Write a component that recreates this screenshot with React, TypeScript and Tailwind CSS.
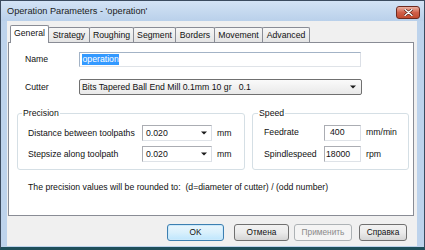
import React from 'react';

const tabs = [
  { label: 'General', w: 'w-[39px]', active: true },
  { label: 'Strategy', w: 'w-[42px]' },
  { label: 'Roughing', w: 'w-[45px]' },
  { label: 'Segment', w: 'w-[43px]' },
  { label: 'Borders', w: 'w-[40px]' },
  { label: 'Movement', w: 'w-[49px]' },
  { label: 'Advanced', w: 'w-[48px]' },
];

function Arrow() {
  return (
    <svg width="6" height="4" viewBox="0 0 6 4" className="shrink-0">
      <path d="M0 0.5h6L3 3.5z" fill="#1a1a1a" />
    </svg>
  );
}

function Combo({ value }: { value: string }) {
  return (
    <div className="w-[70px] h-[16px] flex items-center justify-between bg-white border border-[#abadb3] border-b-[#dfe3e8] border-r-[#dbdfe6] pl-[3px] pr-[4px]">
      <span>{value}</span>
      <Arrow />
    </div>
  );
}

function Field({ value, pad }: { value: string; pad: string }) {
  return (
    <div className={`w-[37px] h-[16px] flex items-center bg-white border border-[#abadb3] border-b-[#dfe3e8] border-r-[#dbdfe6] ${pad}`}>
      {value}
    </div>
  );
}

export default function App() {
  return (
    <div className="w-[425px] h-[250px] flex flex-col bg-[#bdd3ec] border border-[#3b4b5f] border-b-[3px] border-b-[#1e4f5a] text-[8.7px] leading-[11px] text-[#111] font-['Liberation_Sans',Arial,sans-serif] overflow-hidden">
      {/* title bar */}
      <div className="h-[20px] shrink-0 flex items-center justify-between pl-[6px] pr-[4px] bg-linear-to-b from-[#d3e3f5] to-[#b9d0ea]">
        <span className="text-[9.2px] text-[#1b1b1b]">Operation Parameters - 'operation'</span>
        <div className="w-[24px] h-[13px] mt-[2px] rounded-[3px] border border-[#6e2a20] bg-linear-to-b from-[#eab0a2] via-[#d0604a] to-[#c24a2e] flex items-center justify-center">
          <svg width="9" height="7" viewBox="0 0 9 7">
            <path d="M1 0.5l7 6M8 0.5l-7 6" stroke="#4a1a12" strokeWidth="2.6" strokeLinecap="round" />
            <path d="M1 0.5l7 6M8 0.5l-7 6" stroke="#fff" strokeWidth="1.4" strokeLinecap="round" />
          </svg>
        </div>
      </div>

      {/* client area */}
      <div className="flex-1 flex flex-col ml-[6px] mr-[7px] mb-[1px] bg-[#f0f0f0]">
        <div className="flex items-end h-[17px] mt-[4px] pl-[3px]">
          {tabs.map((t, i) =>
            t.active ? (
              <div
                key={i}
                className={`${t.w} h-[18px] -mb-px relative z-10 bg-white border border-[#898c95] border-b-0 rounded-t-[2px] flex items-center justify-center pb-[2px]`}
              >
                {t.label}
              </div>
            ) : (
              <div
                key={i}
                className={`${t.w} h-[15px] -ml-px bg-linear-to-b from-[#f6f6f6] to-[#e4e4e4] border border-[#898c95] border-b-0 rounded-t-[2px] flex items-center justify-center`}
              >
                {t.label}
              </div>
            )
          )}
        </div>

        {/* tab panel */}
        <div className="h-[174px] ml-[1px] mr-[3px] bg-white border border-[#898c95] pt-[9px] pl-[8px]">
          <div className="ml-[8px] flex items-center h-[15px]">
            <span className="w-[54px]">Name</span>
            <div className="w-[282px] h-[15px] flex items-center bg-white border border-[#a3b3c6] border-b-[#dfe3e8] border-r-[#dbdfe6] pl-[2px]">
              <span className="bg-[#3399ff] text-white px-[0.5px]">operation</span>
            </div>
          </div>

          <div className="mt-[12px] ml-[8px] flex items-center h-[16px]">
            <span className="w-[54px]">Cutter</span>
            <div className="w-[283px] h-[16px] flex items-center justify-between rounded-[2px] border border-[#707070] bg-linear-to-b from-[#fafafa] to-[#e9e9e9] pl-[2px] pr-[5px]">
              <span className="whitespace-pre">Bits Tapered Ball End Mill 0.1mm 10 gr   0.1</span>
              <Arrow />
            </div>
          </div>

          <div className="mt-[18px] flex">
            <div className="w-[228px] border border-[#d5dfe5] rounded-[3px] pb-[7px]">
              <div className="-mt-[6px] ml-[4px] px-[1px] bg-white w-fit">Precision</div>
              <div className="mt-[6px] pl-[10px] flex items-center h-[16px]">
                <span className="w-[114px]">Distance between toolpaths</span>
                <Combo value="0.020" />
                <span className="ml-[5px]">mm</span>
              </div>
              <div className="mt-[5px] pl-[10px] flex items-center h-[16px]">
                <span className="w-[114px]">Stepsize along toolpath</span>
                <Combo value="0.020" />
                <span className="ml-[5px]">mm</span>
              </div>
            </div>

            <div className="w-[157px] ml-[7px] border border-[#d5dfe5] rounded-[3px] pb-[7px]">
              <div className="-mt-[6px] ml-[5px] px-[1px] bg-white w-fit">Speed</div>
              <div className="mt-[5px] pl-[11px] flex items-center h-[17px]">
                <span className="w-[60px]">Feedrate</span>
                <Field value="400" pad="pl-[5px]" />
                <span className="ml-[5px]">mm/min</span>
              </div>
              <div className="mt-[5px] pl-[11px] flex items-center h-[16px]">
                <span className="w-[60px]">Spindlespeed</span>
                <Field value="18000" pad="pl-[1px]" />
                <span className="ml-[5px]">rpm</span>
              </div>
            </div>
          </div>

          <div className="mt-[12px] ml-[11px] whitespace-pre">
            The precision values will be rounded to:  (d=diameter of cutter) / (odd number)
          </div>
        </div>

        {/* buttons */}
        <div className="mt-[8px] h-[17px] flex pl-[160px] text-[8.3px]">
          <button className="w-[57px] h-[17px] rounded-[3px] border border-[#3c7fb1] bg-linear-to-b from-[#eaf6fd] via-[#d9f0fc] to-[#bee6fd] shadow-[inset_0_0_0_1px_#cbe9fb]">
            OK
          </button>
          <button className="w-[55px] h-[17px] ml-[10px] rounded-[3px] border border-[#707070] bg-linear-to-b from-[#f2f2f2] via-[#ebebeb] to-[#d5d5d5]">
            Отмена
          </button>
          <button className="w-[58px] h-[17px] ml-[5px] rounded-[3px] border border-[#adb2b5] bg-[#f4f4f4] text-[#8a8a8a]">
            Применить
          </button>
          <button className="w-[48px] h-[17px] ml-[7px] rounded-[3px] border border-[#707070] bg-linear-to-b from-[#f2f2f2] via-[#ebebeb] to-[#d5d5d5]">
            Справка
          </button>
        </div>
      </div>
    </div>
  );
}
